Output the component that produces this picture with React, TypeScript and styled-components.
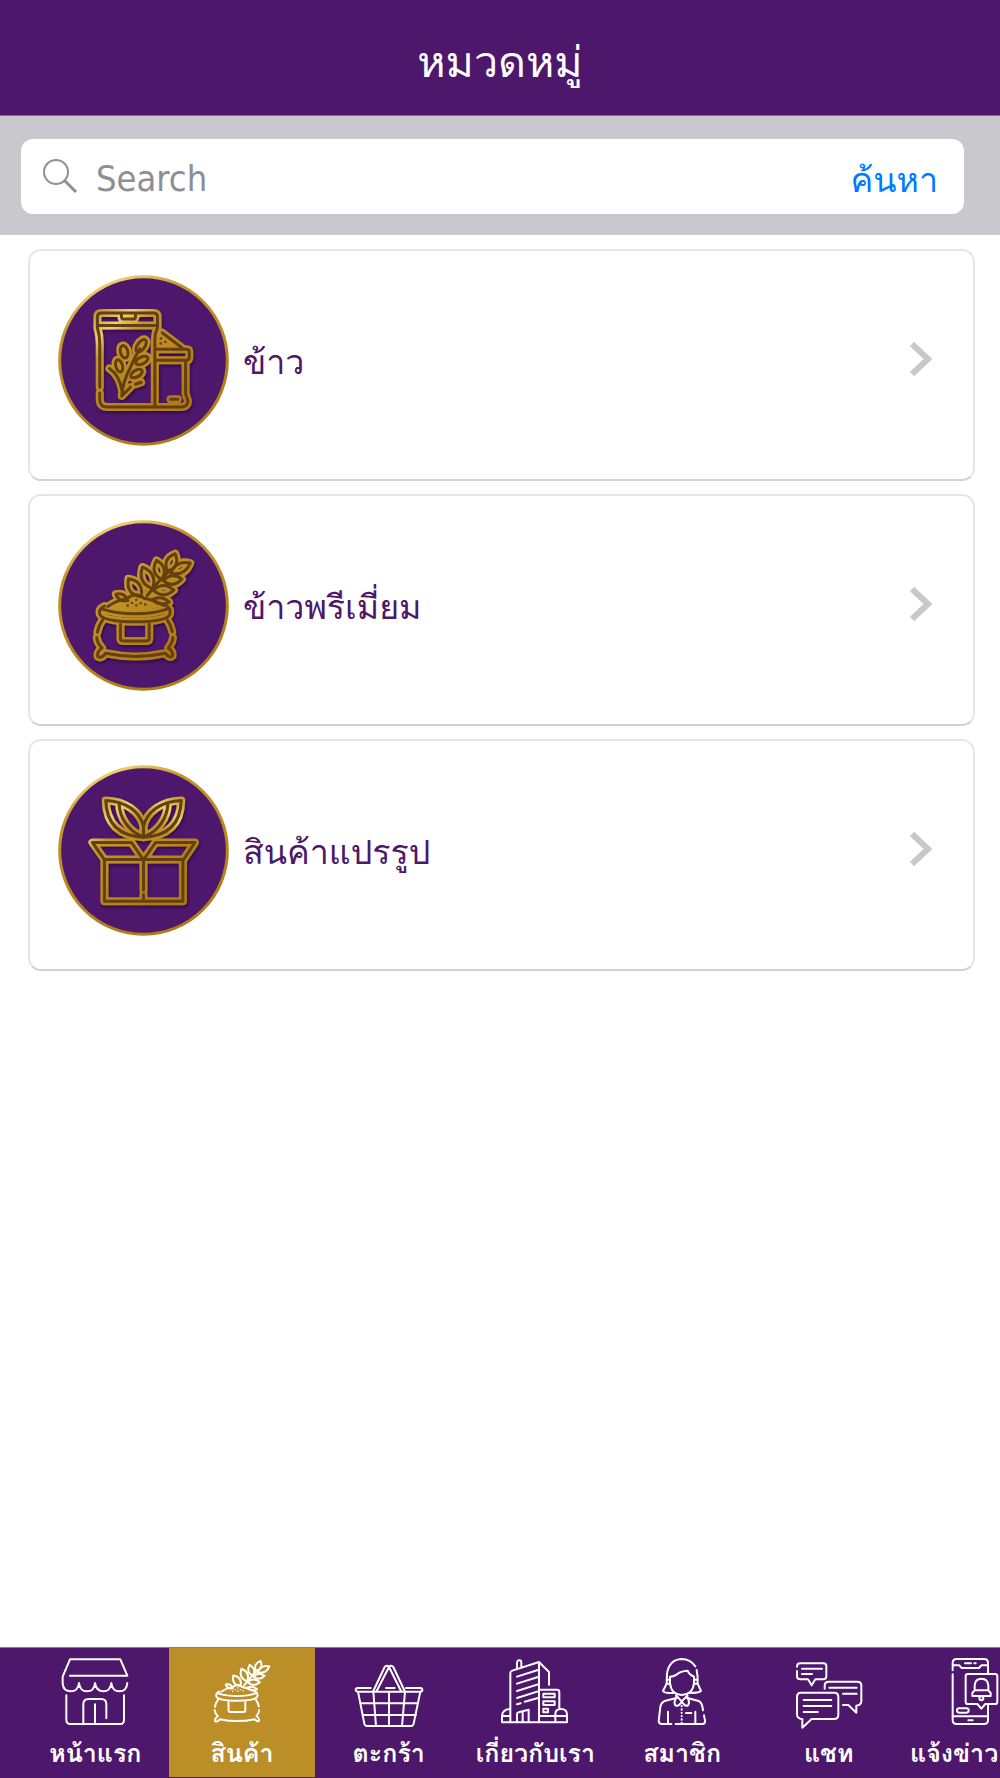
import React from "react";
import styled, { createGlobalStyle } from "styled-components";

const GlobalStyle = createGlobalStyle`
  *, *::before, *::after { box-sizing: border-box; }
  body { margin: 0; background: #fff; }
  body, button, input {
    font-family: "DejaVu Sans Condensed", "Loma", "Waree", "Noto Sans Thai", "Noto Sans", sans-serif;
  }
`;

const Page = styled.div`
  display: flex;
  flex-direction: column;
  min-height: 100vh;
  overflow-x: hidden;
`;

const Header = styled.header`
  display: flex;
  align-items: center;
  justify-content: center;
  height: 116px;
  padding-top: 8px;
  background: #4d176b;
  border-bottom: 1px solid #8a6a9c;
`;

const Title = styled.h1`
  margin: 0;
  color: #fff;
  font-size: 43px;
  line-height: 60px;
  font-weight: 500;
`;

const SearchBar = styled.form`
  padding: 23px 36px 21px 21px;
  background: #c9c8cd;
`;

const SearchField = styled.div`
  display: flex;
  align-items: center;
  height: 75px;
  padding: 0 26px 0 20px;
  background: #fff;
  border-radius: 12px;
`;

const SearchLabel = styled.label`
  display: flex;
  margin-right: 17px;
  padding-bottom: 2px;
`;

const SearchInput = styled.input`
  flex: 1;
  min-width: 0;
  height: 60px;
  padding: 4px 0 0;
  border: 0;
  outline: 0;
  background: transparent;
  color: #333;
  font-size: 36px;
  &::placeholder { color: #8e8e93; opacity: 1; }
`;

const SearchButton = styled.button`
  padding: 6px 0 0;
  border: 0;
  background: none;
  color: #007aff;
  font-size: 34px;
  line-height: 48px;
`;

const List = styled.ul`
  display: flex;
  flex-direction: column;
  gap: 13px;
  margin: 0;
  padding: 14px 25px 24px 28px;
  list-style: none;
`;

const Card = styled.a`
  display: flex;
  align-items: center;
  height: 232px;
  padding: 0 40px 10px 28px;
  border: 2px solid #e6e6e6;
  border-bottom-color: #d2d2d2;
  border-radius: 13px;
  background: #fff;
  color: #4d176b;
  text-decoration: none;
`;

const CardName = styled.span`
  flex: 1;
  padding: 4px 0 0 14px;
  font-size: 34px;
  line-height: 48px;
`;

const Chevron = styled.svg`
  width: 24px;
  height: 36px;
  margin-bottom: 2px;
  fill: none;
  stroke: #c7c7cc;
  stroke-width: 6px;
`;

const TabBar = styled.nav`
  display: flex;
  margin-top: auto;
  padding: 0 0 1px 22px;
  overflow: hidden;
  background: #4d176b;
  border-top: 1px solid #8a7a95;
`;

const Tab = styled.a<{ $active?: boolean }>`
  display: flex;
  flex: 0 0 15%;
  min-width: 0;
  flex-direction: column;
  align-items: center;
  gap: 9px;
  height: 129px;
  padding-top: 9px;
  background: ${(p) => (p.$active ? "#bc8e27" : "transparent")};
  color: #fff;
  text-decoration: none;
  white-space: nowrap;
`;

const TabLabel = styled.span`
  font-size: 25px;
  line-height: 36px;
  font-weight: 700;
`;

const TabIcon = styled.svg`
  flex: none;
  width: 70px;
  height: 70px;
  overflow: visible;
  fill: none;
  stroke: #fff;
  stroke-linecap: round;
  stroke-linejoin: round;
`;

const Medallion = styled.svg`
  flex: none;
  width: 171px;
  height: 171px;
  fill: none;
  stroke-linecap: round;
  stroke-linejoin: round;
`;

/* A pointed leaf between its base and its tip. */
function leaf(bx: number, by: number, tx: number, ty: number, w: number) {
  const len = Math.hypot(tx - bx, ty - by);
  const nx = (-(ty - by) / len) * w;
  const ny = ((tx - bx) / len) * w;
  const mx = (bx + tx) / 2;
  const my = (by + ty) / 2;
  return `M${bx} ${by} Q${mx + nx} ${my + ny} ${tx} ${ty} Q${mx - nx} ${my - ny} ${bx} ${by}`;
}

const riceBag = (
  <>
    <path d="M238 440 V310 Q238 285 231 262 V230 Q231 218 243 218 H399 Q411 218 411 230 V262 Q403 278 403 296 V498" />
    <path d="M238 457 V480 Q240 499 260 499 H484 Q502 498 502 480 L495 460 V364" />
    <path d="M234 255 H408 M303 222 V228 Q303 236 311 236 H337 Q345 236 345 228 V222" />
    <path d="M407 326 H498 Q506 326 506 334 V350 Q506 359 497 359 H407" />
    <path d="M425 277 L484 322 M450 476 H472" />
    <path d="M304 466 Q306 425 330 380 Q345 345 358 325 M267 384 Q298 405 305 452 M306 464 L330 440 M345 431 L362 425" />
    <ellipse cx="311" cy="334" rx="11" ry="19" transform="rotate(-15 311 334)" />
    <ellipse cx="362" cy="316" rx="11" ry="22" transform="rotate(35 362 316)" />
    <ellipse cx="296" cy="376" rx="10" ry="19" transform="rotate(-15 296 376)" />
    <ellipse cx="364" cy="360" rx="10" ry="20" transform="rotate(65 364 360)" />
    <ellipse cx="348" cy="399" rx="10" ry="19" transform="rotate(60 348 399)" />
  </>
);

const sack = (
  <>
    <path d="M252 362 Q234 370 238 386 Q246 408 345 409 Q440 408 448 386 Q452 370 438 362" />
    <path d="M246 371 Q290 385 345 385 Q400 385 442 370" />
    <path d="M262 363 Q288 345 322 338 Q346 318 370 338 Q406 345 430 360" />
    <path d="M247 403 Q234 420 231 440 M229 456 Q231 474 245 487 Q228 500 232 513 Q243 520 256 503 Q345 522 434 503 Q448 520 456 511 Q459 498 443 487 Q456 472 457 456 M455 438 Q452 420 440 403" />
    <path d="M300 416 V459 Q300 466 307 466 H379 Q386 466 386 459 V416" />
    <path d="M380 330 Q410 290 448 254" />
    <path d={leaf(441, 258, 464, 205, 30)} />
    <path d={leaf(450, 263, 509, 233, 28)} />
    <path d={leaf(424, 282, 408, 225, 30)} />
    <path d={leaf(428, 286, 484, 281, 26)} />
    <path d={leaf(396, 310, 366, 245, 34)} />
    <path d={leaf(398, 314, 460, 314, 28)} />
    <path d={leaf(362, 334, 324, 280, 34)} />
    <path d={leaf(395, 342, 446, 350, 18)} />
    <path d={leaf(322, 345, 286, 326, 18)} />
  </>
);

const leafHalf =
  "M369 321 C298 318 258 284 256 211 C314 213 360 244 369 290 V321 M296 222 C298 264 325 302 362 317";

const sproutBox = (
  <>
    <path d={leafHalf} />
    <path d={leafHalf} transform="translate(738 0) scale(-1 1)" />
    <path d="M216 337 H333 L369 389 L405 337 H523 L489 388 H252 Z" />
    <path d="M252 388 V513 H487 V388 M369 390 V480 M369 493 V512" />
  </>
);

type EmblemProps = {
  id: string;
  top: number;
  /* Area filled with solid gold beneath the lines. */
  solid?: string;
  dots?: number[][];
  children: React.ReactNode;
};

function Dots({ at, size }: { at: number[][]; size: number }) {
  return <path d={at.map(([x, y]) => `M${x} ${y} h1`).join(" ")} strokeWidth={size} />;
}

function Emblem({ id, top, solid, dots = [], children }: EmblemProps) {
  return (
    <Medallion viewBox={`113 ${top} 512 512`} aria-hidden="true">
      <defs>
        <linearGradient id={`${id}-ring`} x1="0" y1="0" x2="0.4" y2="1">
          <stop offset="0" stopColor="#d9ad45" />
          <stop offset="0.12" stopColor="#efd273" />
          <stop offset="0.3" stopColor="#c4942a" />
          <stop offset="1" stopColor="#b17c17" />
        </linearGradient>
        <linearGradient id={`${id}-gold`} gradientUnits="userSpaceOnUse" x1="220" y1="200" x2="440" y2="480">
          <stop offset="0" stopColor="#bd8620" />
          <stop offset="0.22" stopColor="#ecd070" />
          <stop offset="0.36" stopColor="#c4942a" />
          <stop offset="1" stopColor="#b17c17" />
        </linearGradient>
        <filter id={`${id}-shade`} x="-20%" y="-20%" width="140%" height="140%">
          <feDropShadow dx="3" dy="6" stdDeviation="5" floodColor="#1c0430" floodOpacity="0.6" />
        </filter>
      </defs>
      <circle cx="369" cy={top + 256} r="251" fill="#4d176b" stroke={`url(#${id}-ring)`} strokeWidth="9" />
      <g filter={`url(#${id}-shade)`}>
        <g stroke={`url(#${id}-gold)`} strokeWidth="24">
          {solid && <path d={solid} fill={`url(#${id}-gold)`} stroke="none" />}
          {children}
        </g>
      </g>
      <g stroke="#65400f" strokeWidth="9">
        {children}
        <Dots at={dots} size={7} />
      </g>
    </Medallion>
  );
}

const grains = [
  [347, 343], [334, 352], [347, 359], [360, 353], [374, 357], [321, 360],
];

const categories = [
  {
    name: "ข้าว",
    icon: (
      <Emblem id="rice" top={104} solid="M410 268 L425 277 L484 322 H410 Z" dots={[[421, 294], [434, 304], [420, 309]]}>
        {riceBag}
      </Emblem>
    ),
  },
  {
    name: "ข้าวพรีเมี่ยม",
    icon: (
      <Emblem id="premium" top={104} solid="M262 363 Q346 300 430 360 Q345 390 262 363 Z" dots={grains}>
        {sack}
      </Emblem>
    ),
  },
  { name: "สินค้าแปรรูป", icon: <Emblem id="box" top={105}>{sproutBox}</Emblem> },
];

const tabs = [
  {
    name: "หน้าแรก",
    box: "180 80 210 210",
    art: (
      <>
        <path d="M210 136 H382 L361 87 H210 L188 139 V160 Q190 183 212 183 Q234 183 237 158 Q240 183 261 183 Q283 183 285 158 Q289 183 310 183 Q331 183 334 158 Q337 183 358 183 Q380 183 382 158" />
        <path d="M199 195 V268 Q199 281 212 281 H360 Q372 281 372 268 V195" />
        <path d="M250 281 V222 Q250 206 266 206 H303 Q319 206 319 222 V264 M285 222 V281" />
      </>
    ),
  },
  {
    name: "สินค้า",
    active: true,
    box: "190 185 358 358",
    width: 10,
    art: (
      <>
        {sack}
        <Dots at={grains} size={7} />
      </>
    ),
  },
  {
    name: "ตะกร้า",
    box: "100 80 210 210",
    art: (
      <>
        <path d="M150 173 H111 Q105 174 105 179 Q106 184 112 184 H298 Q305 184 305 179 Q305 173 299 173 H256 M196 173 H222" />
        <path d="M112 184 L131 280 Q133 287 140 287 H271 Q277 287 279 280 L299 184 M119 219 H292 M125 254 H286" />
        <path d="M158 184 L166 287 M205 184 V287 M253 184 L244 287" />
        <path d="M158 182 L192 110 Q198 103 205 110 Q212 103 218 110 L252 182 M168 182 L205 110 L241 182" />
      </>
    ),
  },
  {
    name: "เกี่ยวกับเรา",
    box: "540 80 210 210",
    art: (
      <>
        <path d="M571 275 V128 Q571 123 577 121 L657 95 V275 M591 115 V97 Q592 90 598 90 Q604 90 604 97 V111 M657 95 L687 125 V163" />
        <path d="M591 139 L654 119 M591 160 L654 140 M591 182 L654 162 M591 203 L654 183 M591 222 L602 219 M614 214 L654 203" />
        <path d="M591 275 V252 Q591 247 596 246 L626 238 V275 M608 243 V275 M657 178 H711 Q718 178 718 185 V233" />
        <path d="M670 190 H704 V201 H670 Z M670 213 H704 V224 H670 Z M670 235 H684 V246 H670 Z" />
        <path d="M569 236 Q546 238 546 258 V276 H741 V252 Q740 236 723 236 Q706 236 706 252 V276 M546 257 H569 M657 257 H741" />
      </>
    ),
  },
  {
    name: "สมาชิก",
    box: "80 80 210 210",
    art: (
      <>
        <path d="M225 108 Q210 86 184 86 Q146 88 140 130 L139 160 L128 182 Q132 188 145 188 H163 M229 119 Q233 138 232 160 L242 182 Q236 188 206 188" />
        <path d="M149 139 V158 Q152 192 184 194 Q218 192 221 158 V139 Q206 133 202 121 Q180 122 170 132 Q160 139 149 139 Z M139 148 H149 M139 160 H149 M221 148 H231 M221 160 H231" />
        <path d="M168 194 V203 L133 212 Q122 217 120 230 L115 272 Q116 281 125 281 H153 M166 281 H248 Q255 280 254 270 L251 255 M248 240 Q246 216 235 212 L201 203 V194" />
        <path d="M168 203 Q159 215 165 225 Q176 230 184 213 Q193 230 203 225 Q210 215 201 203 M168 196 L184 213 L201 196 M143 244 V281 M225 244 V281 M197 248 H213" />
        <path d="M184 227 V278" strokeDasharray="1 9" />
      </>
    ),
  },
  {
    name: "แชท",
    box: "521 80 210 210",
    art: (
      <>
        <path d="M530 109 Q530 99 540 99 H609 Q618 99 618 108 V138 Q618 147 609 147 H585 L574 165 L563 147 H540 Q530 147 530 138 V122 M545 115 H605 M545 131 H575" />
        <path d="M613 175 V166 Q613 154 625 154 H711 Q723 154 723 166 V213 Q723 225 708 226 V247 L684 224 H668 M627 172 H709 M668 190 H709" />
        <path d="M542 187 H641 Q654 187 654 200 V254 Q654 266 641 266 H574 L546 292 V267 Q530 265 530 252 V200 Q530 187 542 187 Z M550 209 H633 M550 227 H633 M550 245 H592" />
      </>
    ),
  },
  {
    name: "แจ้งข่าวสาร",
    box: "960 80 210 210",
    art: (
      <>
        <path d="M998 120 V98 Q998 86 1010 86 H1092 Q1104 86 1104 98 V128 M998 132 V270 Q998 281 1010 281 H1092 Q1104 281 1104 270 V226 M998 105 H1018 L1025 113 H1077 L1084 105 H1104" />
        <path d="M1035 99 H1053 M1063 99 H1067 M998 258 H1104 M1045 270 H1058 M1017 234 H1040 Q1046 234 1046 240 Q1046 247 1040 247 H1017 Q1011 247 1011 240 Q1011 234 1017 234 Z" />
        <path d="M1044 131 H1125 Q1132 131 1132 138 V214 Q1132 221 1125 221 H1096 L1084 235 L1072 221 H1044 Q1037 221 1037 214 V138 Q1037 131 1044 131 Z" />
        <path d="M1064 180 V166 Q1065 145 1084 145 Q1104 145 1105 166 V180 L1112 188 V197 H1057 V188 L1064 180 H1105" />
        <circle cx="1084" cy="204" r="6" />
      </>
    ),
  },
];

export default function App() {
  return (
    <Page>
      <GlobalStyle />
      <Header>
        <Title>หมวดหมู่</Title>
      </Header>
      <SearchBar role="search" onSubmit={(e) => e.preventDefault()}>
        <SearchField>
          <SearchLabel htmlFor="search" aria-label="Search">
            <svg width="38" height="38" viewBox="0 0 38 38" fill="none" stroke="#8e8e93" strokeWidth="2" aria-hidden="true">
              <circle cx="15" cy="15" r="12" />
              <path d="M23 23 L35 35" strokeWidth="3" />
            </svg>
          </SearchLabel>
          <SearchInput id="search" type="text" placeholder="Search" />
          <SearchButton type="submit">ค้นหา</SearchButton>
        </SearchField>
      </SearchBar>
      <List>
        {categories.map((c) => (
          <li key={c.name}>
            <Card href="#">
              {c.icon}
              <CardName>{c.name}</CardName>
              <Chevron viewBox="0 0 24 36" aria-hidden="true">
                <path d="M3 3 L19 18 L3 33" />
              </Chevron>
            </Card>
          </li>
        ))}
      </List>
      <TabBar>
        {tabs.map((t) => (
          <Tab key={t.name} href="#" $active={t.active} aria-current={t.active ? "page" : undefined}>
            <TabIcon viewBox={t.box} strokeWidth={t.width ?? 6} aria-hidden="true">
              {t.art}
            </TabIcon>
            <TabLabel>{t.name}</TabLabel>
          </Tab>
        ))}
      </TabBar>
    </Page>
  );
}
